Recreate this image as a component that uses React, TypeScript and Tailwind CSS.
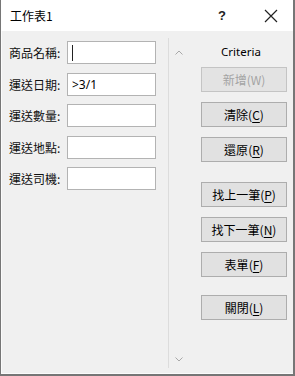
import React from "react";

const cjk = { fontFamily: '"Noto Sans CJK TC", "Noto Sans", sans-serif' };

function Btn({ label, k, disabled, className = "" }: { label: string; k: string; disabled?: boolean; className?: string }) {
  return (
    <div
      className={
        "w-[86px] h-[25px] flex items-center justify-center text-[12px] leading-none border " +
        (disabled ? "bg-[#e3e3e3] border-[#c4c4c4] text-[#a3a3a3] " : "bg-[#e1e1e1] border-[#adadad] text-black ") +
        className
      }
      style={cjk}
    >
      <span>
        {label}(
        {disabled ? k : <u className="underline underline-offset-[2px]">{k}</u>})
      </span>
    </div>
  );
}

function Row({ label, value, caret, className = "" }: { label: string; value?: string; caret?: boolean; className?: string }) {
  return (
    <div className={"flex items-center " + className}>
      <div className="w-[58px] text-[12px] leading-none text-[#111]" style={cjk}>
        {label}:
      </div>
      <div className="w-[89px] h-[23px] bg-white border border-[#b3b3b3] flex items-center pl-[4px] text-[12px] text-black" style={{ fontFamily: '"Noto Sans", sans-serif' }}>
        {caret && <div className="w-[1px] h-[16px] bg-[#222]" />}
        {value && <span className="leading-none">{value}</span>}
      </div>
    </div>
  );
}

export default function App() {
  return (
    <div className="w-[295px] h-[376px] bg-[#f0f0f0] border-l border-r-2 border-b-2 border-[#767676] flex flex-col overflow-hidden">
      <div className="h-[31px] bg-white flex items-center shrink-0">
        <span className="ml-[9px] text-[12px] text-black leading-none" style={cjk}>
          工作表1
        </span>
        <span className="ml-auto mr-[38px] text-[13px] font-bold text-[#222] leading-none" style={{ fontFamily: '"Liberation Sans", sans-serif' }}>
          ?
        </span>
        <svg width="14" height="14" viewBox="0 0 14 14" className="mr-[15px]">
          <path d="M1 1 L13 13 M13 1 L1 13" stroke="#222" strokeWidth="1.2" />
        </svg>
      </div>
      <div className="flex-1 flex border-l border-b border-[#fbfbfb]">
        <div className="w-[166px] pl-[7px] pt-[10px] flex flex-col">
          <Row label="商品名稱" caret />
          <Row label="運送日期" value=">3/1" className="mt-[9px]" />
          <Row label="運送數量" className="mt-[8px]" />
          <Row label="運送地點" className="mt-[9px]" />
          <Row label="運送司機" className="mt-[8px]" />
        </div>
        <div className="mt-[7px] mb-[5px] flex-1 border-l border-[#dcdcdc] flex">
          <div className="w-[32px] flex flex-col items-center justify-between pt-[12px] pb-[6px] pr-[12px]">
            <svg width="8" height="5" viewBox="0 0 8 5">
              <path d="M0.5 4.5 L4 1 L7.5 4.5" stroke="#a8a8a8" strokeWidth="1" fill="none" />
            </svg>
            <svg width="8" height="5" viewBox="0 0 8 5">
              <path d="M0.5 0.5 L4 4 L7.5 0.5" stroke="#a8a8a8" strokeWidth="1" fill="none" />
            </svg>
          </div>
          <div className="flex flex-col pt-[6px]">
            <div className="h-[16px] flex items-center justify-center text-[11.5px] text-black leading-none mr-[6px]" style={{ fontFamily: '"Noto Sans", sans-serif' }}>
              Criteria
            </div>
            <Btn label="新增" k="W" disabled className="mt-[7px]" />
            <Btn label="清除" k="C" className="mt-[10px]" />
            <Btn label="還原" k="R" className="mt-[10px]" />
            <Btn label="找上一筆" k="P" className="mt-[20px]" />
            <Btn label="找下一筆" k="N" className="mt-[10px]" />
            <Btn label="表單" k="F" className="mt-[10px]" />
            <Btn label="關閉" k="L" className="mt-[18px]" />
          </div>
        </div>
      </div>
    </div>
  );
}
